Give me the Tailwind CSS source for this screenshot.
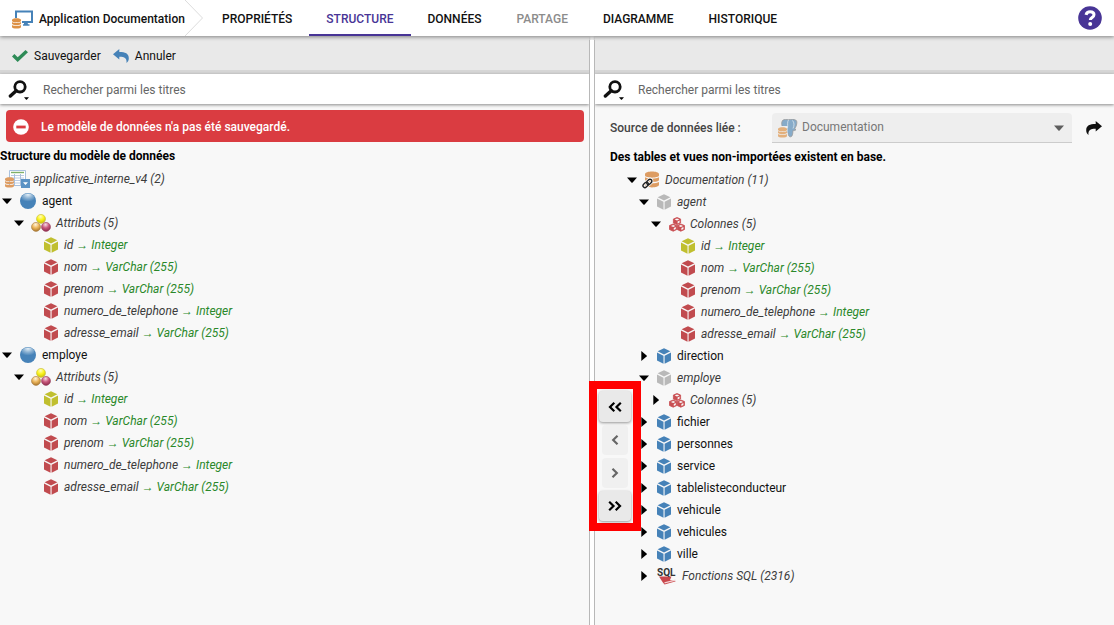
<!DOCTYPE html>
<html lang="fr">
<head>
<meta charset="utf-8">
<meta name="viewport" content="width=device-width, initial-scale=1">
<title>Application Documentation</title>
<script src="https://cdn.jsdelivr.net/npm/@tailwindcss/browser@4"></script>
</head>
<body class="flex min-h-screen flex-col bg-[#f8f8f8] font-['Roboto',sans-serif] text-xs text-[#111]">

<!-- Icon definitions -->
<svg class="absolute size-0" aria-hidden="true">
  <defs>
    <radialGradient id="gBlue" cx=".5" cy=".12" r=".7"><stop offset="0" stop-color="#e4eff7"/><stop offset=".5" stop-color="#8fb4d4"/><stop offset="1" stop-color="#4682b8"/></radialGradient>
    <radialGradient id="gYellow" cx=".45" cy=".25" r=".75"><stop offset="0" stop-color="#fffbc0"/><stop offset=".5" stop-color="#fbf41c"/><stop offset="1" stop-color="#c9bd10"/></radialGradient>
    <radialGradient id="gOrange" cx=".45" cy=".25" r=".75"><stop offset="0" stop-color="#fff3dc"/><stop offset=".5" stop-color="#ecb65c"/><stop offset="1" stop-color="#a8742c"/></radialGradient>
    <radialGradient id="gPink" cx=".45" cy=".25" r=".75"><stop offset="0" stop-color="#f6dbe4"/><stop offset=".5" stop-color="#c9587c"/><stop offset="1" stop-color="#8c2c4c"/></radialGradient>
    <symbol id="down" viewBox="0 0 10 6"><path d="M0 .5h10L5.6 5.4q-.6.6-1.2 0z" fill="#000"/></symbol>
    <symbol id="right" viewBox="0 0 6 10"><path d="M.3 0v10L5.6 5.5q.5-.5 0-1z" fill="#000"/></symbol>
    <symbol id="cube" viewBox="0 0 14 16"><path d="M7 .2 13.4 3.3 7 6.6.6 3.3zM0 4.5l6.5 3.3v7.9L0 12.4zM14 4.5 7.6 7.8v7.9L14 12.4z" fill="currentColor"/></symbol>
    <symbol id="ball" viewBox="0 0 16 16"><circle cx="8" cy="8" r="8" fill="#4682b8"/><ellipse cx="8" cy="5.4" rx="6.6" ry="5" fill="url(#gBlue)"/></symbol>
    <symbol id="balls" viewBox="0 0 20 18"><circle cx="10" cy="4.9" r="4.5" fill="url(#gYellow)" stroke="#c4ba3a" stroke-width=".6"/><circle cx="5" cy="12.9" r="4.5" fill="url(#gOrange)" stroke="#a87c40" stroke-width=".6"/><circle cx="15" cy="12.9" r="4.5" fill="url(#gPink)" stroke="#96405c" stroke-width=".6"/></symbol>
    <symbol id="cubes" viewBox="0 0 16 15"><g fill="#c94f53" stroke="#c94f53" stroke-width=".8" stroke-linejoin="round"><path d="M8 .5 11.6 2v4L8 7.6 4.4 6V2z"/><path d="M4.2 7 7.8 8.5v4L4.2 14.2.5 12.5v-4z"/><path d="M11.8 7l3.7 1.5v4l-3.7 1.7-3.6-1.7v-4z"/></g><g fill="#f8f8f8"><path d="M8 1.4 10.3 2.4 8 3.4 5.7 2.4zM4.2 7.9 6.5 8.9 4.2 9.9 1.9 8.9zM11.8 7.9l2.3 1-2.3 1-2.3-1z"/><path d="M8.6 4.4l2-.9v2l-2 1zM4.8 10.9l2-.9v2l-2 1zM12.4 10.9l2-.9v2l-2 1z"/></g></symbol>
    <symbol id="coins" viewBox="0 0 10 12"><g fill="currentColor"><path d="M0 2.1C0-.3 10-.3 10 2.1v1.100C10 5.200 0 5.200 0 3.200z"/><path d="M0 4.400c2 1.300 8 1.300 10 0v2C10 8.300 0 8.300 0 6.400z"/><path d="M0 7.700c2 1.300 8 1.300 10 0v2.100c0 2.500-10 2.500-10 0z"/></g></symbol>
    <symbol id="lens" viewBox="0 0 20 20"><circle cx="12" cy="6.800" r="5.200" fill="none" stroke="#111" stroke-width="2.800"/><path d="M8.200 10.700 2.400 16" stroke="#111" stroke-width="3.400" stroke-linecap="round"/></symbol>
  </defs>
</svg>

<header class="relative z-20 flex h-9 shrink-0 items-stretch bg-white shadow-[0_1px_4px_rgba(0,0,0,0.45)]">
  <a href="#" class="flex w-[185px] items-center gap-[6px] pt-[2px] pl-3 font-medium whitespace-nowrap">
    <svg class="h-[19px] w-[21px] shrink-0" viewBox="0 0 21 19" aria-hidden="true">
      <path d="M4 8V1.500h16v10.500H10" fill="none" stroke="#4682b8" stroke-width="2"/>
      <path d="M12 12.500h3.500l.5 1.800h1.500v1.400h-6.500v-1.400h1z" fill="#4682b8"/>
      <use href="#coins" x="0" y="8" width="9" height="11" color="#dd9145"/>
    </svg>
    Application Documentation
  </a>
  <svg class="h-9 w-5 shrink-0" viewBox="0 0 20 36" aria-hidden="true"><path d="M0 0 17.500 18 0 36" fill="none" stroke="#dcdcdc"/></svg>
  <nav class="flex flex-1 items-stretch font-medium">
    <a href="#" class="flex items-center px-[17px] pt-[2px]">PROPRIÉTÉS</a>
    <a href="#" aria-current="page" class="flex items-center border-b-2 border-[#483596] px-[17px] pt-1 text-[#483596]">STRUCTURE</a>
    <a href="#" class="flex items-center px-[17px] pt-[2px]">DONNÉES</a>
    <a href="#" aria-disabled="true" class="flex items-center px-[18px] pt-[2px] text-[#8c8c8c]">PARTAGE</a>
    <a href="#" class="flex items-center px-[17px] pt-[2px]">DIAGRAMME</a>
    <a href="#" class="flex items-center px-[18px] pt-[2px]">HISTORIQUE</a>
  </nav>
  <button type="button" aria-label="Aide" class="mr-3 self-center">
    <svg class="size-6" viewBox="0 0 24 24" aria-hidden="true"><circle cx="12" cy="12" r="11.800" fill="#483596"/><path d="M8 8.800c.6-2.200 2-3.100 4.100-3.100 2.400 0 3.900 1.200 3.900 3.100 0 2.700-3.700 2.700-3.700 5.300" fill="none" stroke="#fff" stroke-width="3"/><circle cx="12.200" cy="17.900" r="2" fill="#fff"/></svg>
  </button>
</header>

<main class="relative flex flex-1 items-stretch">

  <!-- Data model -->
  <section class="flex min-w-0 flex-[589] flex-col">
    <div class="flex h-[34px] items-center gap-3 bg-[#e9e9e9] pt-[6px] pl-3 shadow-[0_1px_3px_rgba(0,0,0,0.35)]">
      <button type="button" class="flex items-center gap-[6px]">
        <svg class="h-3 w-4" viewBox="0 0 16 12" aria-hidden="true"><path d="M0 6.500 2.400 4l3.300 3.200L13.500 0 16 2.300 5.700 12z" fill="#2e8b57"/></svg>
        Sauvegarder
      </button>
      <button type="button" class="flex items-center gap-[6px]">
        <svg class="h-[14px] w-4" viewBox="0 0 16 14" aria-hidden="true"><path d="M0 5.200 6.300 0v3c6 0 9.500 1.600 9.500 6.200 0 2-.8 3.600-2.300 4.800.5-4.300-1.500-6.200-7.200-6.200v2.800z" fill="#4682b8"/></svg>
        Annuler
      </button>
    </div>
    <div class="h-1 bg-[#d6d6d6]"></div>
    <div class="relative z-10 flex h-[30px] items-center bg-white pt-[2px] pl-2 shadow-[0_1px_3px_rgba(0,0,0,0.45)]">
      <button type="button" aria-label="Options de recherche" class="flex items-end">
        <svg class="size-[20px]" aria-hidden="true"><use href="#lens"/></svg>
        <svg class="-ml-1 h-[3px] w-[5px]" aria-hidden="true"><use href="#down"/></svg>
      </button>
      <input type="search" aria-label="Rechercher dans le modèle" placeholder="Rechercher parmi les titres" class="ml-[14px] min-w-0 flex-1 outline-none placeholder:text-[#666]">
    </div>
    <div role="alert" class="mt-[6px] mr-[5px] ml-[6px] flex h-8 items-center gap-3 rounded bg-[#da3c41] pt-[2px] pl-[7px] font-medium text-white">
      <svg class="size-4 shrink-0" viewBox="0 0 16 16" aria-hidden="true"><circle cx="8" cy="8" r="7.800" fill="#fff"/><path d="M3.300 6.600h9.400v2.800H3.300z" fill="#da3c41"/></svg>
      Le modèle de données n'a pas été sauvegardé.
    </div>
    <h2 class="mt-[6px] mb-1 font-bold text-black">Structure du modèle de données</h2>

    <div class="flex h-[22px] items-center gap-[3px] pl-[5px] text-[#3c3c3c] italic">
      <svg class="h-[18px] w-[25px] shrink-0" viewBox="0 0 25 18" aria-hidden="true">
        <path d="M4.500.5h16v15h-16z" fill="#fff" stroke="#a9c0dd"/>
        <path d="M6 2.500h13" stroke="#7fb069" stroke-width="1.400"/>
        <path d="M6 5.500h13M6 8h13M6 10.500h13M6 13h13" stroke="#bccce4"/>
        <path d="M9.500 4v11M15.500 4v11" stroke="#a9c0dd"/>
        <use href="#coins" x="0" y="7" width="9" height="11" color="#dd9c62"/>
        <path d="M16 9h9v9h-9z" fill="#5b92c4"/><path d="M18 12.300h5L20.500 15z" fill="#fff"/>
      </svg>
      applicative_interne_v4 (2)
    </div>
    <ul>
      <li>
        <div class="flex h-[22px] items-center"><button type="button" aria-label="Replier agent" class="flex w-[14px] justify-center"><svg class="h-[6px] w-[10px]"><use href="#down"/></svg></button><svg class="mx-[6px] size-4"><use href="#ball"/></svg>agent</div>
        <ul class="pl-3">
          <li>
            <div class="flex h-[22px] items-center text-[#3c3c3c] italic"><button type="button" aria-label="Replier Attributs" class="flex w-[14px] justify-center"><svg class="h-[6px] w-[10px]"><use href="#down"/></svg></button><svg class="mx-[5px] h-[18px] w-5"><use href="#balls"/></svg>Attributs (5)</div>
            <ul class="pl-[26px] text-[#3c3c3c] italic">
              <li class="flex h-[22px] items-center"><svg class="mx-[6px] h-4 w-[14px] text-[#c0bf2f]"><use href="#cube"/></svg><p>id <span class="font-['Roboto','Liberation_Sans',sans-serif] text-[#2a882a]">→ Integer</span></p></li>
              <li class="flex h-[22px] items-center"><svg class="mx-[6px] h-4 w-[14px] text-[#c14b4f]"><use href="#cube"/></svg><p>nom <span class="font-['Roboto','Liberation_Sans',sans-serif] text-[#2a882a]">→ VarChar (255)</span></p></li>
              <li class="flex h-[22px] items-center"><svg class="mx-[6px] h-4 w-[14px] text-[#c14b4f]"><use href="#cube"/></svg><p>prenom <span class="font-['Roboto','Liberation_Sans',sans-serif] text-[#2a882a]">→ VarChar (255)</span></p></li>
              <li class="flex h-[22px] items-center"><svg class="mx-[6px] h-4 w-[14px] text-[#c14b4f]"><use href="#cube"/></svg><p>numero_de_telephone <span class="font-['Roboto','Liberation_Sans',sans-serif] text-[#2a882a]">→ Integer</span></p></li>
              <li class="flex h-[22px] items-center"><svg class="mx-[6px] h-4 w-[14px] text-[#c14b4f]"><use href="#cube"/></svg><p>adresse_email <span class="font-['Roboto','Liberation_Sans',sans-serif] text-[#2a882a]">→ VarChar (255)</span></p></li>
            </ul>
          </li>
        </ul>
      </li>
      <li>
        <div class="flex h-[22px] items-center"><button type="button" aria-label="Replier employe" class="flex w-[14px] justify-center"><svg class="h-[6px] w-[10px]"><use href="#down"/></svg></button><svg class="mx-[6px] size-4"><use href="#ball"/></svg>employe</div>
        <ul class="pl-3">
          <li>
            <div class="flex h-[22px] items-center text-[#3c3c3c] italic"><button type="button" aria-label="Replier Attributs" class="flex w-[14px] justify-center"><svg class="h-[6px] w-[10px]"><use href="#down"/></svg></button><svg class="mx-[5px] h-[18px] w-5"><use href="#balls"/></svg>Attributs (5)</div>
            <ul class="pl-[26px] text-[#3c3c3c] italic">
              <li class="flex h-[22px] items-center"><svg class="mx-[6px] h-4 w-[14px] text-[#c0bf2f]"><use href="#cube"/></svg><p>id <span class="font-['Roboto','Liberation_Sans',sans-serif] text-[#2a882a]">→ Integer</span></p></li>
              <li class="flex h-[22px] items-center"><svg class="mx-[6px] h-4 w-[14px] text-[#c14b4f]"><use href="#cube"/></svg><p>nom <span class="font-['Roboto','Liberation_Sans',sans-serif] text-[#2a882a]">→ VarChar (255)</span></p></li>
              <li class="flex h-[22px] items-center"><svg class="mx-[6px] h-4 w-[14px] text-[#c14b4f]"><use href="#cube"/></svg><p>prenom <span class="font-['Roboto','Liberation_Sans',sans-serif] text-[#2a882a]">→ VarChar (255)</span></p></li>
              <li class="flex h-[22px] items-center"><svg class="mx-[6px] h-4 w-[14px] text-[#c14b4f]"><use href="#cube"/></svg><p>numero_de_telephone <span class="font-['Roboto','Liberation_Sans',sans-serif] text-[#2a882a]">→ Integer</span></p></li>
              <li class="flex h-[22px] items-center"><svg class="mx-[6px] h-4 w-[14px] text-[#c14b4f]"><use href="#cube"/></svg><p>adresse_email <span class="font-['Roboto','Liberation_Sans',sans-serif] text-[#2a882a]">→ VarChar (255)</span></p></li>
            </ul>
          </li>
        </ul>
      </li>
    </ul>
  </section>

  <!-- Splitter with transfer buttons over it -->
  <div class="relative z-20 mt-1 w-[6px] shrink-0 border-x border-[#b8b8b8] bg-white">
    <div class="absolute top-[341px] -left-px flex w-[52px] flex-col items-center gap-[3px] border-8 border-[#f00] bg-[#f8f8f8] py-[2px]">
      <button type="button" aria-label="Tout importer" class="flex h-[31px] w-8 items-center justify-center rounded bg-[#e9e9e9] shadow-[0_1px_3px_rgba(0,0,0,0.4)]"><svg class="h-[10px] w-[14px]" viewBox="0 0 14 10" fill="none" stroke="#000" stroke-width="2.200" aria-hidden="true"><path d="M6.300.8 2 5l4.300 4.200M12.800.8 8.500 5l4.300 4.200"/></svg></button>
      <button type="button" disabled aria-label="Importer" class="flex h-[30px] w-[26px] items-center justify-center rounded bg-[#f0f0f0]"><svg class="h-[10px] w-2" viewBox="0 0 8 10" fill="none" stroke="#666" stroke-width="2.200" aria-hidden="true"><path d="M6.500.8 2.200 5l4.300 4.200"/></svg></button>
      <button type="button" disabled aria-label="Exporter" class="flex h-[30px] w-[26px] items-center justify-center rounded bg-[#f0f0f0]"><svg class="h-[10px] w-2" viewBox="0 0 8 10" fill="none" stroke="#666" stroke-width="2.200" aria-hidden="true"><path d="M1.500.8 5.800 5 1.500 9.200"/></svg></button>
      <button type="button" aria-label="Tout exporter" class="flex h-[30px] w-8 items-center justify-center rounded bg-[#e9e9e9] shadow-[0_1px_3px_rgba(0,0,0,0.4)]"><svg class="h-[10px] w-[14px]" viewBox="0 0 14 10" fill="none" stroke="#000" stroke-width="2.200" aria-hidden="true"><path d="M1.200.8 5.500 5 1.200 9.200M7.700.8 12 5 7.700 9.200"/></svg></button>
    </div>
  </div>

  <!-- Linked data source -->
  <section class="flex min-w-0 flex-[519] flex-col">
    <div class="h-[34px] bg-[#e9e9e9] shadow-[0_1px_3px_rgba(0,0,0,0.35)]"></div>
    <div class="h-1 bg-[#d6d6d6]"></div>
    <div class="relative z-10 flex h-[30px] items-center bg-white pt-[2px] pl-2 shadow-[0_1px_3px_rgba(0,0,0,0.45)]">
      <button type="button" aria-label="Options de recherche" class="flex items-end">
        <svg class="size-[20px]" aria-hidden="true"><use href="#lens"/></svg>
        <svg class="-ml-1 h-[3px] w-[5px]" aria-hidden="true"><use href="#down"/></svg>
      </button>
      <input type="search" aria-label="Rechercher dans la source" placeholder="Rechercher parmi les titres" class="ml-[14px] min-w-0 flex-1 outline-none placeholder:text-[#666]">
    </div>
    <div class="mt-[9px] flex h-[30px] items-center pr-3 pl-[15px]">
      <label for="source" class="w-[162px] shrink-0 font-medium text-[#444]">Source de données liée :</label>
      <div class="relative min-w-0 flex-1">
        <select id="source" disabled class="h-[30px] w-full appearance-none rounded-t border-b border-[#ccc] bg-[#eee] pb-[2px] pl-[30px] text-[#777] opacity-100"><option>Documentation</option></select>
        <svg class="absolute top-[6px] left-[6px] h-[19px] w-5" viewBox="0 0 20 19" aria-hidden="true">
          <path d="M4.500 1.500C6 0 9 .3 10.500.8c2-.8 6-.8 7.800.7 1.500 2-.4 7-1.800 8.500l1.500.6c-.8 1.300-2.400 1-3 .8-.2 2 0 6-2.300 6.400-2 .3-2.500-2-2.700-4L5 10C3.800 7 3 3.500 4.500 1.500z" fill="#86abc9" stroke="#999" stroke-width=".8"/>
          <path d="M10.500 1C9 3 10 6 9.500 9M14.500 1.500c1.800 2 2 5 .5 8" fill="none" stroke="#dce6ee" stroke-width=".8"/>
          <path d="M0 7h9.500v12H0z" fill="#eee"/>
          <use href="#coins" x="0" y="8" width="9" height="11" color="#e3b07c"/>
        </svg>
        <svg class="absolute top-3 right-2 h-[6px] w-[10px] opacity-60" aria-hidden="true"><use href="#down"/></svg>
      </div>
      <button type="button" aria-label="Ouvrir la source" class="ml-[14px]"><svg class="h-[14px] w-4" viewBox="0 0 16 14" aria-hidden="true"><path d="M16 5.200 9.700 0v3C3.700 3 .2 4.600.2 9.200c0 2 .8 3.600 2.300 4.800-.5-4.300 1.500-6.200 7.200-6.200v2.800z" fill="#111"/></svg></button>
    </div>
    <h2 class="mt-[6px] mb-1 pl-[15px] font-bold text-black">Des tables et vues non-importées existent en base.</h2>

    <ul class="pl-[30px]">
      <li>
        <div class="flex h-[22px] items-center text-[#3c3c3c] italic"><button type="button" aria-label="Replier Documentation" class="flex w-[14px] justify-center"><svg class="h-[6px] w-[10px]"><use href="#down"/></svg></button>
          <svg class="mr-1 ml-[3px] h-[18px] w-[19px]" viewBox="0 0 19 18" aria-hidden="true"><use href="#coins" x="3" y="0" width="14" height="17" color="#dd9c62"/><g fill="none" stroke="#f8f8f8" stroke-width="3"><rect x="-2.800" y="-1.800" width="6" height="3.800" rx="1.900" transform="translate(3.500 14) rotate(-45)"/><rect x="-2.800" y="-1.800" width="6" height="3.800" rx="1.900" transform="translate(7 11) rotate(-45)"/></g><g fill="none" stroke="#222" stroke-width="1.400"><rect x="-2.800" y="-1.800" width="6" height="3.800" rx="1.900" transform="translate(3.500 14) rotate(-45)"/><rect x="-2.800" y="-1.800" width="6" height="3.800" rx="1.900" transform="translate(7 11) rotate(-45)"/></g></svg>Documentation (11)</div>
        <ul class="pl-3">
          <li>
            <div class="flex h-[22px] items-center text-[#3c3c3c] italic"><button type="button" aria-label="Replier agent" class="flex w-[14px] justify-center"><svg class="h-[6px] w-[10px]"><use href="#down"/></svg></button><svg class="mx-[6px] h-4 w-[14px] text-[#b9b9b9]"><use href="#cube"/></svg>agent</div>
            <ul class="pl-3">
              <li>
                <div class="flex h-[22px] items-center text-[#3c3c3c] italic"><button type="button" aria-label="Replier Colonnes" class="flex w-[14px] justify-center"><svg class="h-[6px] w-[10px]"><use href="#down"/></svg></button><svg class="mr-[5px] ml-[6px] h-[15px] w-4"><use href="#cubes"/></svg>Colonnes (5)</div>
                <ul class="pl-[26px] text-[#3c3c3c] italic">
                  <li class="flex h-[22px] items-center"><svg class="mx-[6px] h-4 w-[14px] text-[#c0bf2f]"><use href="#cube"/></svg><p>id <span class="font-['Roboto','Liberation_Sans',sans-serif] text-[#2a882a]">→ Integer</span></p></li>
                  <li class="flex h-[22px] items-center"><svg class="mx-[6px] h-4 w-[14px] text-[#c14b4f]"><use href="#cube"/></svg><p>nom <span class="font-['Roboto','Liberation_Sans',sans-serif] text-[#2a882a]">→ VarChar (255)</span></p></li>
                  <li class="flex h-[22px] items-center"><svg class="mx-[6px] h-4 w-[14px] text-[#c14b4f]"><use href="#cube"/></svg><p>prenom <span class="font-['Roboto','Liberation_Sans',sans-serif] text-[#2a882a]">→ VarChar (255)</span></p></li>
                  <li class="flex h-[22px] items-center"><svg class="mx-[6px] h-4 w-[14px] text-[#c14b4f]"><use href="#cube"/></svg><p>numero_de_telephone <span class="font-['Roboto','Liberation_Sans',sans-serif] text-[#2a882a]">→ Integer</span></p></li>
                  <li class="flex h-[22px] items-center"><svg class="mx-[6px] h-4 w-[14px] text-[#c14b4f]"><use href="#cube"/></svg><p>adresse_email <span class="font-['Roboto','Liberation_Sans',sans-serif] text-[#2a882a]">→ VarChar (255)</span></p></li>
                </ul>
              </li>
            </ul>
          </li>
          <li class="flex h-[22px] items-center"><button type="button" aria-label="Déplier direction" class="flex w-[14px] justify-center"><svg class="h-[10px] w-[6px]"><use href="#right"/></svg></button><svg class="mx-[6px] h-4 w-[14px] text-[#4682b8]"><use href="#cube"/></svg>direction</li>
          <li>
            <div class="flex h-[22px] items-center text-[#3c3c3c] italic"><button type="button" aria-label="Replier employe" class="flex w-[14px] justify-center"><svg class="h-[6px] w-[10px]"><use href="#down"/></svg></button><svg class="mx-[6px] h-4 w-[14px] text-[#b9b9b9]"><use href="#cube"/></svg>employe</div>
            <ul class="pl-3">
              <li class="flex h-[22px] items-center text-[#3c3c3c] italic"><button type="button" aria-label="Déplier Colonnes" class="flex w-[14px] justify-center"><svg class="h-[10px] w-[6px]"><use href="#right"/></svg></button><svg class="mr-[5px] ml-[6px] h-[15px] w-4"><use href="#cubes"/></svg>Colonnes (5)</li>
            </ul>
          </li>
          <li class="flex h-[22px] items-center"><button type="button" aria-label="Déplier fichier" class="flex w-[14px] justify-center"><svg class="h-[10px] w-[6px]"><use href="#right"/></svg></button><svg class="mx-[6px] h-4 w-[14px] text-[#4682b8]"><use href="#cube"/></svg>fichier</li>
          <li class="flex h-[22px] items-center"><button type="button" aria-label="Déplier personnes" class="flex w-[14px] justify-center"><svg class="h-[10px] w-[6px]"><use href="#right"/></svg></button><svg class="mx-[6px] h-4 w-[14px] text-[#4682b8]"><use href="#cube"/></svg>personnes</li>
          <li class="flex h-[22px] items-center"><button type="button" aria-label="Déplier service" class="flex w-[14px] justify-center"><svg class="h-[10px] w-[6px]"><use href="#right"/></svg></button><svg class="mx-[6px] h-4 w-[14px] text-[#4682b8]"><use href="#cube"/></svg>service</li>
          <li class="flex h-[22px] items-center"><button type="button" aria-label="Déplier tablelisteconducteur" class="flex w-[14px] justify-center"><svg class="h-[10px] w-[6px]"><use href="#right"/></svg></button><svg class="mx-[6px] h-4 w-[14px] text-[#4682b8]"><use href="#cube"/></svg>tablelisteconducteur</li>
          <li class="flex h-[22px] items-center"><button type="button" aria-label="Déplier vehicule" class="flex w-[14px] justify-center"><svg class="h-[10px] w-[6px]"><use href="#right"/></svg></button><svg class="mx-[6px] h-4 w-[14px] text-[#4682b8]"><use href="#cube"/></svg>vehicule</li>
          <li class="flex h-[22px] items-center"><button type="button" aria-label="Déplier vehicules" class="flex w-[14px] justify-center"><svg class="h-[10px] w-[6px]"><use href="#right"/></svg></button><svg class="mx-[6px] h-4 w-[14px] text-[#4682b8]"><use href="#cube"/></svg>vehicules</li>
          <li class="flex h-[22px] items-center"><button type="button" aria-label="Déplier ville" class="flex w-[14px] justify-center"><svg class="h-[10px] w-[6px]"><use href="#right"/></svg></button><svg class="mx-[6px] h-4 w-[14px] text-[#4682b8]"><use href="#cube"/></svg>ville</li>
          <li class="flex h-[22px] items-center text-[#3c3c3c] italic"><button type="button" aria-label="Déplier Fonctions SQL" class="flex w-[14px] justify-center"><svg class="h-[10px] w-[6px]"><use href="#right"/></svg></button>
            <svg class="mr-[5px] ml-[6px] h-[18px] w-5" viewBox="0 0 20 18" aria-hidden="true"><path d="M2 9.500h12.500l-1.500 3.500 6 1.200-11.500 3.300-2-2.500z" fill="#c9474c"/><path d="M7.500 15.800l11-2.600" stroke="#f3d4d5" stroke-width="1.200"/><text x="0" y="8.500" font-family="Roboto" font-size="10" font-weight="700" font-style="normal" fill="#333">SQL</text></svg>Fonctions SQL (2316)</li>
        </ul>
      </li>
    </ul>
  </section>
</main>
</body>
</html>
